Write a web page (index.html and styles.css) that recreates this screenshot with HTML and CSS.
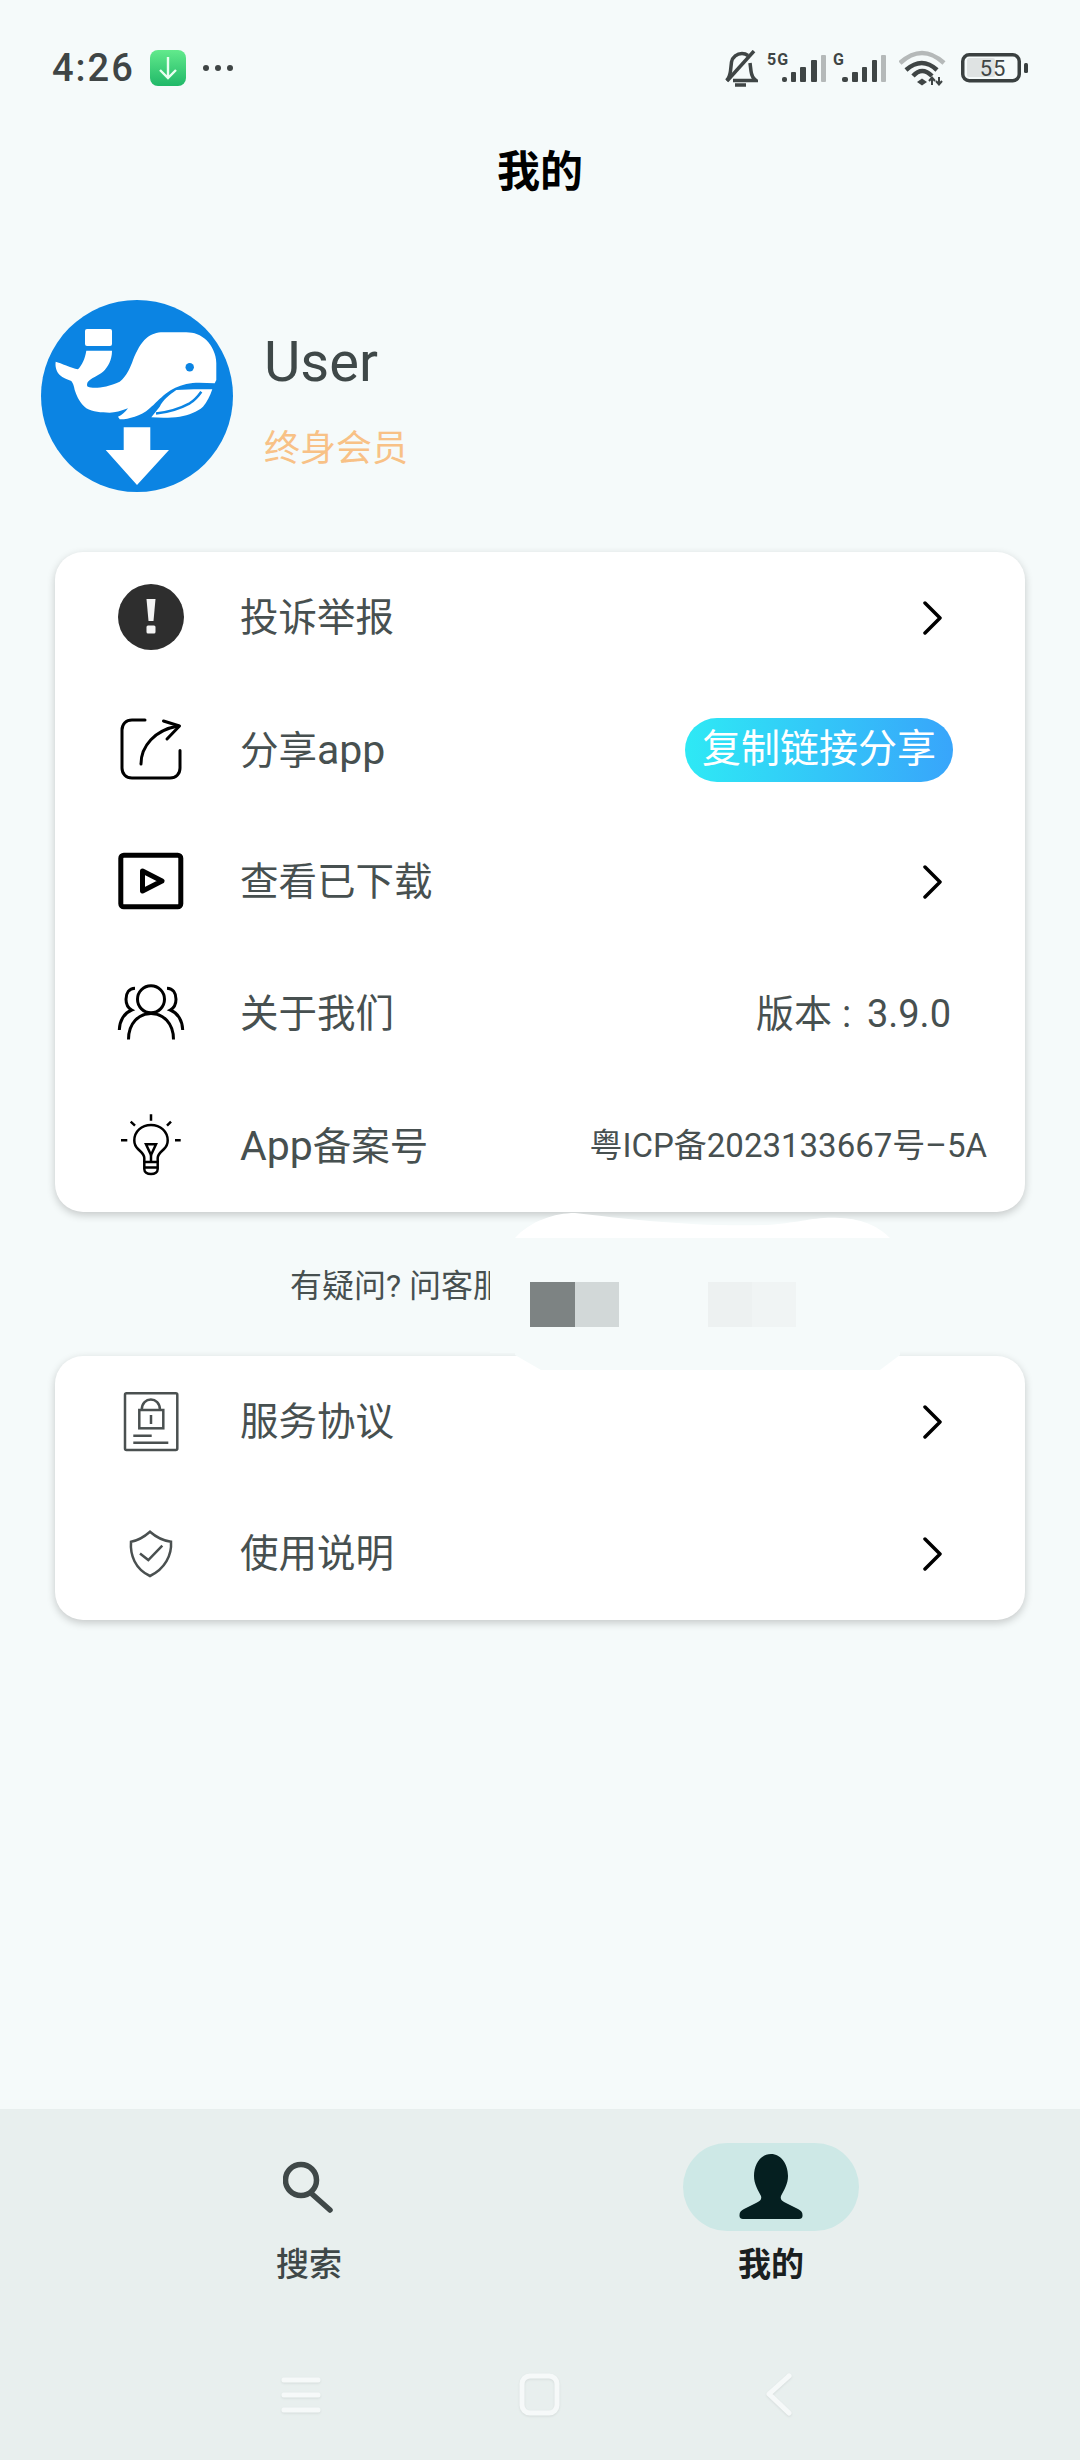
FILE: index.html
```html
<!DOCTYPE html>
<html lang="zh">
<head>
<meta charset="utf-8">
<title>我的</title>
<link rel="stylesheet" href="styles.css">
</head>
<body>
<div class="page">
	<div class="statusBar">
		<div class="statusLeft">
			<span class="clock">4:26</span>
			<svg class="appIcon" width="36" height="36" viewBox="0 0 36 36">
				<defs><linearGradient id="greenFill" x1="0" y1="0" x2="0" y2="1"><stop offset="0" stop-color="#62ea8c"/><stop offset="1" stop-color="#20b868"/></linearGradient></defs>
				<rect width="36" height="36" rx="8" fill="url(#greenFill)"/>
				<path d="M18 7V28M10 20L18 28L26 20" fill="none" stroke="#e9fff0" stroke-width="2.4"/>
			</svg>
			<svg width="32" height="8" viewBox="0 0 32 8" fill="#3f4545"><circle cx="4" cy="4" r="3"/><circle cx="16" cy="4" r="3"/><circle cx="28" cy="4" r="3"/></svg>
		</div>
		<div class="statusRight">
			<svg class="bell" width="34" height="38" viewBox="0 0 34 38" fill="none" stroke="#3f4545" stroke-width="3.500">
				<path d="M2.500 30.500C5 28 6 25 6.500 21L7.500 12C8.500 7 13 3.500 18 3.500C20 3.500 22 4 24 5.500M26 13L27 21C27.500 25 29 28.500 32 30.500H9"/>
				<path d="M30 1L3 31"/>
				<path d="M11 35H22"/>
			</svg>
			<svg class="signal" width="60" height="36" viewBox="0 0 60 36">
				<text class="netText" x="0" y="15">5G</text>
				<g fill="#3f4545"><rect x="15" y="27" width="5" height="5" rx="2"/><rect x="24" y="22" width="5" height="10" rx="1"/><rect x="33" y="17" width="6" height="15" rx="1"/><rect x="44" y="10" width="6" height="22" rx="1"/></g>
				<rect x="54" y="5" width="5" height="27" rx="1" fill="#b5b9b9"/>
			</svg>
			<svg class="signal2" width="54" height="36" viewBox="0 0 54 36">
				<text class="netText" x="0" y="15">G</text>
				<g fill="#3f4545"><rect x="9" y="27" width="6" height="5" rx="2"/><rect x="19" y="22" width="6" height="10" rx="1"/><rect x="29" y="17" width="5" height="15" rx="1"/><rect x="39" y="10" width="5" height="22" rx="1"/></g>
				<rect x="48" y="5" width="5" height="27" rx="1" fill="#b5b9b9"/>
			</svg>
			<svg class="wifi" width="48" height="36" viewBox="0 0 48 36" fill="none" stroke-width="4.500">
				<path d="M1 13Q23 -7 45 13" stroke="#b5b9b9"/>
				<path d="M7 20Q23 6 38 20" stroke="#3f4545"/>
				<path d="M14 26Q23 16 33 26" stroke="#3f4545"/>
				<path d="M23 28.500L28 32L23 35.500L18 32Z" fill="#3f4545" stroke="none"/>
				<path d="M33 35V28M30 31L33 27.500L36 31M40 27V34M37 31L40 34.500L43 31" stroke="#3f4545" stroke-width="2"/>
			</svg>
			<svg class="battery" width="67" height="30" viewBox="0 0 67 30">
				<rect x="6" y="5" width="28" height="19" rx="2" fill="#dfe3e3"/>
				<rect x="1.750" y="1.750" width="56.500" height="26" rx="6.500" fill="none" stroke="#3a4040" stroke-width="3.500"/>
				<rect x="63" y="10" width="4" height="10" rx="1.500" fill="#3a4040"/>
				<text class="batteryText" x="32" y="23">55</text>
			</svg>
		</div>
	</div>

	<h1 class="title">我的</h1>

	<div class="profile">
		<svg class="avatar" width="192" height="192" viewBox="0 0 192 192">
			<circle cx="96" cy="96" r="96" fill="#0b84e3"/>
			<g fill="#fff">
				<rect x="44" y="29" width="27" height="17" rx="2"/>
				<path d="M14.700 61.700C20 63 30 68 37 69.300C41 65 44 59 45.300 50.700H71C71 60 67 67 62 71.700C57 76 50 78 47 81.700C45.500 84 46 86.500 47 86.700C52 89 65 88 78.700 81.700C86 76 90 66 92 60C96 50 100 43 105.300 38.300C110 34 116 32.300 122 32.300H145.300C153 32.300 160 35 165.300 40C171 46 175.300 54 175.300 63.300V80L173.700 83.300C164 83 154 82 145.300 84C137 86 131 89 125.300 93.300C118 99 114 104 108.700 108.300C104 113 99 115 93.700 116.700C88 118.500 83 119.500 78.700 119.300L77 116.700C81 115 84 112 87 108.300C80 111 74 112.700 68.700 112.700C60 112.700 52 112 45.300 108.300C39 103 36 97 33.700 90C33 86 32 83 30.300 81C26 79 22 78 18.700 75C15 71 14 66 14.700 61.700Z"/>
				<path d="M171.300 89.300C160 89 147 89 135.300 90C128 95 122 100 118.700 106.700L110.300 117.300C120 118 130 118 138.700 116.700C148 115 156 112 162 106.700C166 102 169 96 171.300 89.300Z"/>
				<path d="M82.700 127.300H109.300V150H128L96 185L64.700 150H82.700Z"/>
			</g>
			<circle cx="148.700" cy="67.300" r="4.200" fill="#0b84e3"/>
			<path d="M115 113.500C128 112 140 108 148.700 103.300C154 100 158 95 160.300 91.700" fill="none" stroke="#0b84e3" stroke-width="2.500"/>
		</svg>
		<div class="profileText">
			<div class="userName">User</div>
			<div class="memberTag">终身会员</div>
		</div>
	</div>

	<div class="card">
		<div class="row">
			<svg class="rowIcon" width="68" height="68" viewBox="0 0 68 68">
				<circle cx="34" cy="33" r="33" fill="#2e2e2e"/>
				<path d="M29.500 15H38.500L36.500 37H31.500Z" fill="#f4f4f4"/>
				<rect x="29.500" y="41.500" width="9" height="8" rx="1.500" fill="#f4f4f4"/>
			</svg>
			<span class="rowLabel">投诉举报</span>
			<svg class="chevron" width="19" height="34" viewBox="0 0 19 34"><path d="M2 2L17 17L2 32" fill="none" stroke="#000" stroke-width="3.500" stroke-linecap="round" stroke-linejoin="round"/></svg>
		</div>
		<div class="row">
			<svg class="rowIcon" width="68" height="68" viewBox="0 0 68 68" fill="none" stroke="#000" stroke-width="3" stroke-linecap="round" stroke-linejoin="round">
				<path d="M28 4H15C9 4 5 8 5 14V52C5 58 9 62 15 62H53C59 62 63 58 63 52V34.500"/>
				<path d="M24 48C24 30 38 14 61 10"/>
				<path d="M46.500 5L62.500 10L50 23"/>
			</svg>
			<span class="rowLabel">分享<span class="latin">app</span></span>
			<span class="sharePill">复制链接分享</span>
		</div>
		<div class="row">
			<svg class="rowIcon" width="68" height="68" viewBox="0 0 68 68" fill="none" stroke="#000" stroke-width="5" stroke-linejoin="round">
				<rect x="3.800" y="7.200" width="60" height="51.600" rx="3"/>
				<path d="M25.500 23L45 33L25.500 43Z"/>
			</svg>
			<span class="rowLabel">查看已下载</span>
			<svg class="chevron" width="19" height="34" viewBox="0 0 19 34"><path d="M2 2L17 17L2 32" fill="none" stroke="#000" stroke-width="3.500" stroke-linecap="round" stroke-linejoin="round"/></svg>
		</div>
		<div class="row">
			<svg class="rowIcon" width="68" height="68" viewBox="0 0 68 68" fill="none" stroke="#000" stroke-width="3">
				<circle cx="34" cy="19.300" r="13.500"/>
				<path d="M11.500 59.500C11.500 43 22 33.500 34 33.500S56.500 43 56.500 59.500"/>
				<path d="M18 8.300C12 8.500 9 13 9 19.300C9 24 11 28 14.700 30C7 33 2.500 41 2.300 50"/>
				<path d="M50 8.300C56 8.500 59 13 59 19.300C59 24 57 28 53.300 30C61 33 65.500 41 65.700 50"/>
			</svg>
			<span class="rowLabel">关于我们</span>
			<span class="rowValue">版本<span class="colon">:</span>3.9.0</span>
		</div>
		<div class="row">
			<svg class="rowIcon" width="68" height="68" viewBox="0 0 68 68" fill="none" stroke="#000" stroke-width="2.500">
				<path d="M34 2.300V8.700M13.700 9.700L18 13.700M54 9.700L50 13.700M4 28.300H10.300M58 28.300H63.700"/>
				<path d="M27.300 50V46C27.300 42 24 40 21 37C18.500 34.500 17.300 31.500 17.300 28.500C17.300 19.500 24.500 13 34 13S50.700 19.500 50.700 28.500C50.700 31.500 49.500 34.500 47 37C44 40 40.700 42 40.700 46V50"/>
				<path d="M29 32.300H39L34 43Z"/>
				<path d="M34 43V50"/>
				<path d="M27.300 50H40.700V57C40.700 60 38 62 34 62S27.300 60 27.300 57ZM27.300 55.500H40.700"/>
			</svg>
			<span class="rowLabel"><span class="latin">App</span>备案号</span>
			<span class="rowValue rowValueSmall">粤ICP备2023133667号–5A</span>
		</div>
	</div>

	<div class="hint"><span class="hintText">有疑问? 问客服</span></div>

	<div class="card">
		<div class="row">
			<svg class="rowIcon" width="68" height="68" viewBox="0 0 68 68" fill="none" stroke="#4a5050" stroke-width="2.500">
				<rect x="8" y="5.300" width="52.300" height="56.700" rx="1.500"/>
				<rect x="22.300" y="22" width="24" height="18.300"/>
				<path d="M24.700 22C24.700 8 43 8 43 22"/>
				<path d="M34 27V36M16.300 47.700H34.700M16.300 54.700H51.300"/>
			</svg>
			<span class="rowLabel">服务协议</span>
			<svg class="chevron" width="19" height="34" viewBox="0 0 19 34"><path d="M2 2L17 17L2 32" fill="none" stroke="#000" stroke-width="3.500" stroke-linecap="round" stroke-linejoin="round"/></svg>
		</div>
		<div class="row">
			<svg class="rowIcon" width="68" height="68" viewBox="0 0 68 68" fill="none" stroke="#4a5050" stroke-width="2.500">
				<path d="M33 11.700C27 17 21 20.500 14 21.700C13 35 18 49 33 56C48 49 55 35 54 21.700C45 20.500 39 17 33 11.700Z"/>
				<path d="M23 33.500L31.300 40L45.300 25.700"/>
			</svg>
			<span class="rowLabel">使用说明</span>
			<svg class="chevron" width="19" height="34" viewBox="0 0 19 34"><path d="M2 2L17 17L2 32" fill="none" stroke="#000" stroke-width="3.500" stroke-linecap="round" stroke-linejoin="round"/></svg>
		</div>
	</div>

	<div class="bottomNav">
		<div class="tabs">
			<div class="tab">
				<div class="tabIcon">
					<svg width="52" height="52" viewBox="0 0 52 52" fill="none" stroke="#3f4848" stroke-width="5.500" stroke-linecap="round"><circle cx="18" cy="19" r="15.500"/><path d="M29 33L47 49"/></svg>
				</div>
				<span class="tabLabel">搜索</span>
			</div>
			<div class="tab tabActive">
				<div class="tabIcon">
					<svg width="66" height="66" viewBox="0 0 66 66"><path d="M33 0C43 0 50 10 50 22C50 30 46 36 43 42C42 46 44 47 47 48.500L60 55C63 56.500 64.500 58 64.500 61V62C64.500 64 63 65 61 65H5C3 65 1.500 64 1.500 62V61C1.500 58 3 56.500 6 55L19 48.500C22 47 24 46 23 42C20 36 16 30 16 22C16 10 23 0 33 0Z" fill="#051f20"/></svg>
				</div>
				<span class="tabLabel">我的</span>
			</div>
		</div>
		<div class="sysBar">
			<div class="sysBtn">
				<svg width="40" height="40" viewBox="0 0 40 40" fill="none" stroke="#f6f9f9" stroke-width="5" stroke-linecap="round"><path d="M3 5H37M3 20H37M3 35H37"/></svg>
			</div>
			<div class="sysBtn">
				<svg width="42" height="44" viewBox="0 0 42 44" fill="none" stroke="#f6f9f9" stroke-width="5"><rect x="3" y="3" width="35" height="37" rx="8"/></svg>
			</div>
			<div class="sysBtn">
				<svg width="28" height="44" viewBox="0 0 28 44" fill="none" stroke="#f6f9f9" stroke-width="5" stroke-linecap="round" stroke-linejoin="round"><path d="M24 3L4 21L24 40"/></svg>
			</div>
		</div>
	</div>

	<!-- covered-up part of the screenshot, lies over the end of the hint text -->
	<svg class="coverPatch" width="410" height="157" viewBox="0 0 410 157">
		<rect x="0" y="40" width="40" height="100" fill="#f5fafa"/>
		<path d="M25 25C40 8 65 0 85 0C135 6 205 14 275 12C310 10 325 3 350 5C375 6 390 15 400 25Z" fill="#fff"/>
		<path d="M25 25H410V142L390 157H51L25 142Z" fill="#f5fafa"/>
		<rect x="40" y="69" width="45" height="45" fill="#7d8383"/>
		<rect x="85" y="69" width="44" height="45" fill="#d2d8d8"/>
		<rect x="218" y="69" width="44" height="45" fill="#edf1f1"/>
		<rect x="262" y="69" width="44" height="45" fill="#f0f4f4"/>
	</svg>
</div>
</body>
</html>
```

FILE: styles.css
```css
html, body {
	margin: 0;
	padding: 0;
}
body {
	background: #f5fafa;
	font-family: Roboto, "Noto Sans CJK SC", sans-serif;
	color: #475050;
}
svg {
	display: block;
}
.page {
	position: relative;
	width: 1080px;
	height: 2460px;
	display: flex;
	flex-direction: column;
	overflow: hidden;
}

.statusBar {
	height: 136px;
	box-sizing: border-box;
	padding: 50px 52px 0 52px;
	display: flex;
	justify-content: space-between;
	align-items: flex-start;
	flex-shrink: 0;
}
.statusLeft {
	display: flex;
	align-items: center;
	height: 36px;
}
.clock {
	width: 98px;
	font-size: 38px;
	font-weight: 500;
	letter-spacing: 2px;
	color: #3f4545;
	line-height: 36px;
}
.appIcon {
	margin-right: 16px;
}
.statusRight {
	display: flex;
	align-items: flex-start;
}
.bell {
	margin-right: 9px;
}
.signal {
	margin-right: 6px;
}
.signal2 {
	margin-right: 12px;
}
.wifi {
	margin-right: 14px;
}
.netText {
	font-size: 16px;
	font-weight: 700;
	letter-spacing: 1px;
	fill: #3f4545;
}
.battery {
	margin-top: 3px;
}
.batteryText {
	font-size: 22px;
	letter-spacing: 1px;
	text-anchor: middle;
	fill: #3f4545;
}

.title {
	margin: 0;
	height: 72px;
	line-height: 72px;
	font-size: 43px;
	font-weight: 700;
	text-align: center;
	color: #000;
	flex-shrink: 0;
}

.profile {
	margin: 92px 0 60px 41px;
	display: flex;
	align-items: flex-start;
	gap: 31px;
	flex-shrink: 0;
}
.profileText {
	padding-top: 30px;
}
.userName {
	font-size: 56px;
	line-height: 64px;
	color: #3f4848;
}
.memberTag {
	margin-top: 32px;
	font-size: 36px;
	line-height: 46px;
	color: #f8c186;
}

.card {
	margin: 0 55px;
	background: #fff;
	border-radius: 28px;
	box-shadow: 0 3px 9px rgba(0, 0, 0, 0.2);
	flex-shrink: 0;
}
.row {
	height: 132px;
	padding: 0 38px 0 62px;
	display: flex;
	align-items: center;
}
.rowIcon {
	flex-shrink: 0;
	margin-right: 55px;
}
.rowLabel {
	font-size: 38.5px;
	line-height: 50px;
	color: #475050;
}
.latin {
	font-size: 41px;
}
.chevron {
	margin-left: auto;
	margin-right: 45px;
}
.sharePill {
	margin-left: auto;
	margin-right: 34px;
	width: 268px;
	height: 64px;
	line-height: 62px;
	border-radius: 32px;
	text-align: center;
	font-size: 39px;
	color: #fff;
	background: linear-gradient(90deg, #2ee9f5, #38a5fb);
}
.rowValue {
	margin-left: auto;
	margin-right: 36px;
	font-size: 38px;
	line-height: 50px;
	color: #475050;
}
.colon {
	display: inline-block;
	width: 25px;
	padding-left: 10px;
}
.rowValueSmall {
	margin-right: 0;
	font-size: 33px;
}

.hint {
	height: 144px;
	box-sizing: border-box;
	padding: 0 0 2px 290px;
	display: flex;
	align-items: center;
	flex-shrink: 0;
}
.hintText {
	white-space: nowrap;
	font-size: 32px;
	color: #475050;
}

.bottomNav {
	margin-top: auto;
	height: 351px;
	background: #e8efee;
	flex-shrink: 0;
}
.tabs {
	padding: 34px 78px 0 78px;
	height: 202px;
	display: flex;
}
.tab {
	flex: 1;
	display: flex;
	flex-direction: column;
	align-items: center;
}
.tabIcon {
	width: 176px;
	height: 88px;
	border-radius: 44px;
	display: flex;
	align-items: center;
	justify-content: center;
}
.tabActive .tabIcon {
	background: #cde8e6;
}
.tabLabel {
	margin-top: 12px;
	font-size: 33px;
	line-height: 44px;
	font-weight: 500;
	color: #3f4848;
}
.tabActive .tabLabel {
	font-weight: 700;
	color: #1a2020;
}
.sysBar {
	height: 100px;
	display: flex;
	justify-content: center;
}
.sysBtn {
	width: 239px;
	display: flex;
	align-items: center;
	justify-content: center;
}
.sysBtn svg {
	filter: drop-shadow(0 1px 1px rgba(0, 0, 0, 0.08));
}

.coverPatch {
	position: absolute;
	left: 490px;
	top: 1213px;
}
```
